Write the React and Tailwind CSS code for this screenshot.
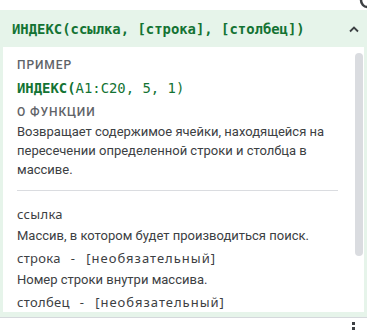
export default function App() {
  const mono = { fontFamily: '"DejaVu Sans Mono", "Liberation Mono", monospace' };
  const sans = { fontFamily: 'Roboto, "Noto Sans", sans-serif' };
  const param = { fontFamily: '"Noto Sans", Roboto, sans-serif' };

  const args = [
    { name: 'ссылка', opt: false, desc: 'Массив, в котором будет производиться поиск.' },
    { name: 'строка', opt: true, desc: 'Номер строки внутри массива.' },
    { name: 'столбец', opt: true, desc: '' },
  ];

  return (
    <div className="relative w-[367px] h-[331px] overflow-hidden bg-white" style={sans}>
      {/* fragment of something above the card */}
      <svg className="absolute top-0 right-0" width="8" height="9" viewBox="0 0 8 9">
        <path d="M2 0 C 2 4, 5 7, 8 7" fill="none" stroke="#3c4043" strokeWidth="2.5" />
      </svg>

      <div className="h-[10px]" />

      <section className="bg-[#e6f4ea] px-[3px] pb-[5px] border-b border-[#d5d8dc]">
        <div className="h-[37px] flex items-center justify-between pl-[9px] pr-[4px]">
          <h2 className="text-[13.9px] leading-[20px] font-bold text-[#137333] whitespace-nowrap" style={mono}>
            ИНДЕКС(ссылка, [строка], [столбец])
          </h2>
          <svg width="12" height="8" viewBox="0 0 12 8">
            <path d="M2 6.5 L6 2.5 L10 6.5" fill="none" stroke="#3c4043" strokeWidth="1.8" />
          </svg>
        </div>

        <div className="bg-white h-[265px] flex overflow-hidden">
          <div className="flex-1 pl-[14px] pr-[17px] pt-[10px] text-[#3c4043]">
            <div className="text-[12px] leading-[16px] font-medium text-[#5f6368] uppercase tracking-[0.9px]">
              Пример
            </div>
            <div className="mt-[5px] text-[13.9px] leading-[20px] text-[#137333] whitespace-nowrap" style={mono}>
              <span className="font-bold">ИНДЕКС(</span>A1:C20, 5, 1)
            </div>
            <div className="mt-[6px] text-[12px] leading-[16px] font-medium text-[#5f6368] uppercase tracking-[0.9px]">
              О функции
            </div>
            <p className="mt-[2px] text-[13px] leading-[19px]">
              Возвращает содержимое ячейки, находящейся на пересечении определенной строки и столбца в массиве.
            </p>
            <div className="mt-[11px] h-px bg-[#dadce0]" />
            <div className="mt-[12px] text-[13px] leading-[22px]">
              {args.map((a) => (
                <div key={a.name}>
                  <div className="flex whitespace-nowrap tracking-[0.3px]" style={param}>
                    <span>{a.name}</span>
                    {a.opt && (
                      <>
                        <span className="ml-[10px]">-</span>
                        <span className="ml-[11px] tracking-[1px]">[необязательный]</span>
                      </>
                    )}
                  </div>
                  {a.desc && <div>{a.desc}</div>}
                </div>
              ))}
            </div>
          </div>
          <div className="w-[9px] pt-[6px] pr-[1px] shrink-0">
            <div className="w-[8px] h-[203px] rounded-full bg-[#dadce0]" />
          </div>
        </div>
      </section>

      <div className="flex justify-end pr-[12px] pt-[4px]">
        <div className="flex flex-col gap-[2px]">
          <span className="w-[3px] h-[3px] bg-[#3c4043]" />
          <span className="w-[3px] h-[3px] bg-[#3c4043]" />
          <span className="w-[3px] h-[3px] bg-[#3c4043]" />
        </div>
      </div>
    </div>
  );
}
